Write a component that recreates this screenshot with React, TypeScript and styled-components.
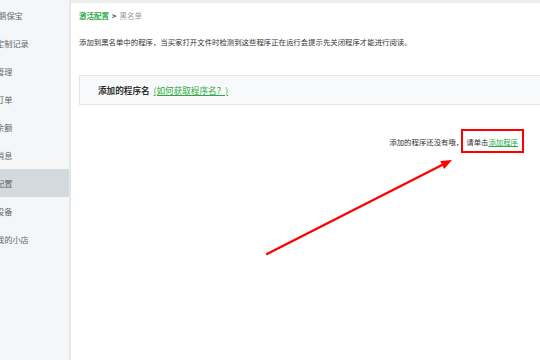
import React from "react";
import styled, { createGlobalStyle } from "styled-components";

const Global = createGlobalStyle`
  html, body { margin: 0; padding: 0; background: #fff; }
  body { font-family: "Noto Sans CJK SC", "Noto Sans", sans-serif; }
  * { box-sizing: border-box; }
`;

const Page = styled.div`
  position: relative;
  width: 540px;
  height: 360px;
  display: flex;
  overflow: hidden;
`;

const Sidebar = styled.nav`
  width: 71px;
  flex: none;
  background: #f4f6f8;
  border-right: 2px solid #e3e7ea;
  padding-top: 1px;
  display: flex;
  flex-direction: column;
  overflow: hidden;
`;

const NavItem = styled.div<{ $active?: boolean; $shift?: number }>`
  height: 28px;
  line-height: 28px;
  text-indent: ${(p) => p.$shift ?? -4}px;
  white-space: nowrap;
  font-size: 8.2px;
  color: #666;
  background: ${(p) => (p.$active ? "#d3d9dc" : "transparent")};
`;

const Main = styled.main`
  flex: 1;
  border-top: 3px solid #eceef0;
  padding: 7px 16px 0 8px;
  display: flex;
  flex-direction: column;
  min-width: 0;
`;

const Crumbs = styled.div`
  font-size: 7.5px;
  line-height: 12px;
  color: #999;
  white-space: nowrap;
`;

const CrumbLink = styled.span`
  color: #2eaa45;
  font-weight: bold;
`;

const Sep = styled.span`
  color: #444;
  font-weight: bold;
  margin: 0 3px;
`;

const Desc = styled.p`
  margin: 14px 0 0;
  font-size: 7.4px;
  line-height: 12px;
  color: #333;
  white-space: nowrap;
`;

const NameBox = styled.div`
  margin: 27px -40px 0 0;
  height: 30px;
  background: #f8f9fa;
  border: 1px solid #e3e5e7;
  display: flex;
  align-items: center;
  padding-left: 18px;
  white-space: nowrap;
`;

const BoxLabel = styled.span`
  font-size: 8.6px;
  font-weight: bold;
  color: #333;
`;

const Link = styled.a`
  color: #2eaa45;
  text-decoration: underline;
  cursor: pointer;
`;

const BoxLink = styled(Link)`
  font-size: 8.6px;
  margin-left: 4px;
`;

const Empty = styled.div`
  margin-top: 24px;
  display: flex;
  justify-content: flex-end;
  align-items: center;
  font-size: 7.4px;
  color: #333;
  white-space: nowrap;
`;

const Highlight = styled.span`
  display: inline-flex;
  align-items: center;
  height: 24px;
  border: 2px solid #f00;
  padding: 0 4px 0 3px;
  margin-left: -2px;
`;

const Overlay = styled.svg`
  position: absolute;
  left: 0;
  top: 0;
  pointer-events: none;
`;

const items = ["企鹅保宝", "定制记录", "管理", "订单", "余额", "消息", "配置", "设备", "我的小店"];

export default function App() {
  return (
    <>
      <Global />
      <Page>
        <Sidebar>
          {items.map((t, i) => (
            <NavItem key={t} $active={i === 6} $shift={i === 0 ? -10 : -4}>
              {t}
            </NavItem>
          ))}
        </Sidebar>
        <Main>
          <Crumbs>
            <CrumbLink>激活配置</CrumbLink>
            <Sep>&gt;</Sep>黑名单
          </Crumbs>
          <Desc>添加到黑名单中的程序，当买家打开文件时检测到这些程序正在运行会提示先关闭程序才能进行阅读。</Desc>
          <NameBox>
            <BoxLabel>添加的程序名</BoxLabel>
            <BoxLink>(如何获取程序名？)</BoxLink>
          </NameBox>
          <Empty>
            添加的程序还没有哦，
            <Highlight>
              请单击<Link>添加程序</Link>
            </Highlight>
          </Empty>
        </Main>
        <Overlay width="540" height="360" viewBox="0 0 540 360">
          <line x1="267" y1="254" x2="444" y2="164" stroke="#f00" strokeWidth="2.4" strokeLinecap="round" />
          <polygon points="452,160 440.2,161 444.2,169" fill="#f00" />
        </Overlay>
      </Page>
    </>
  );
}
